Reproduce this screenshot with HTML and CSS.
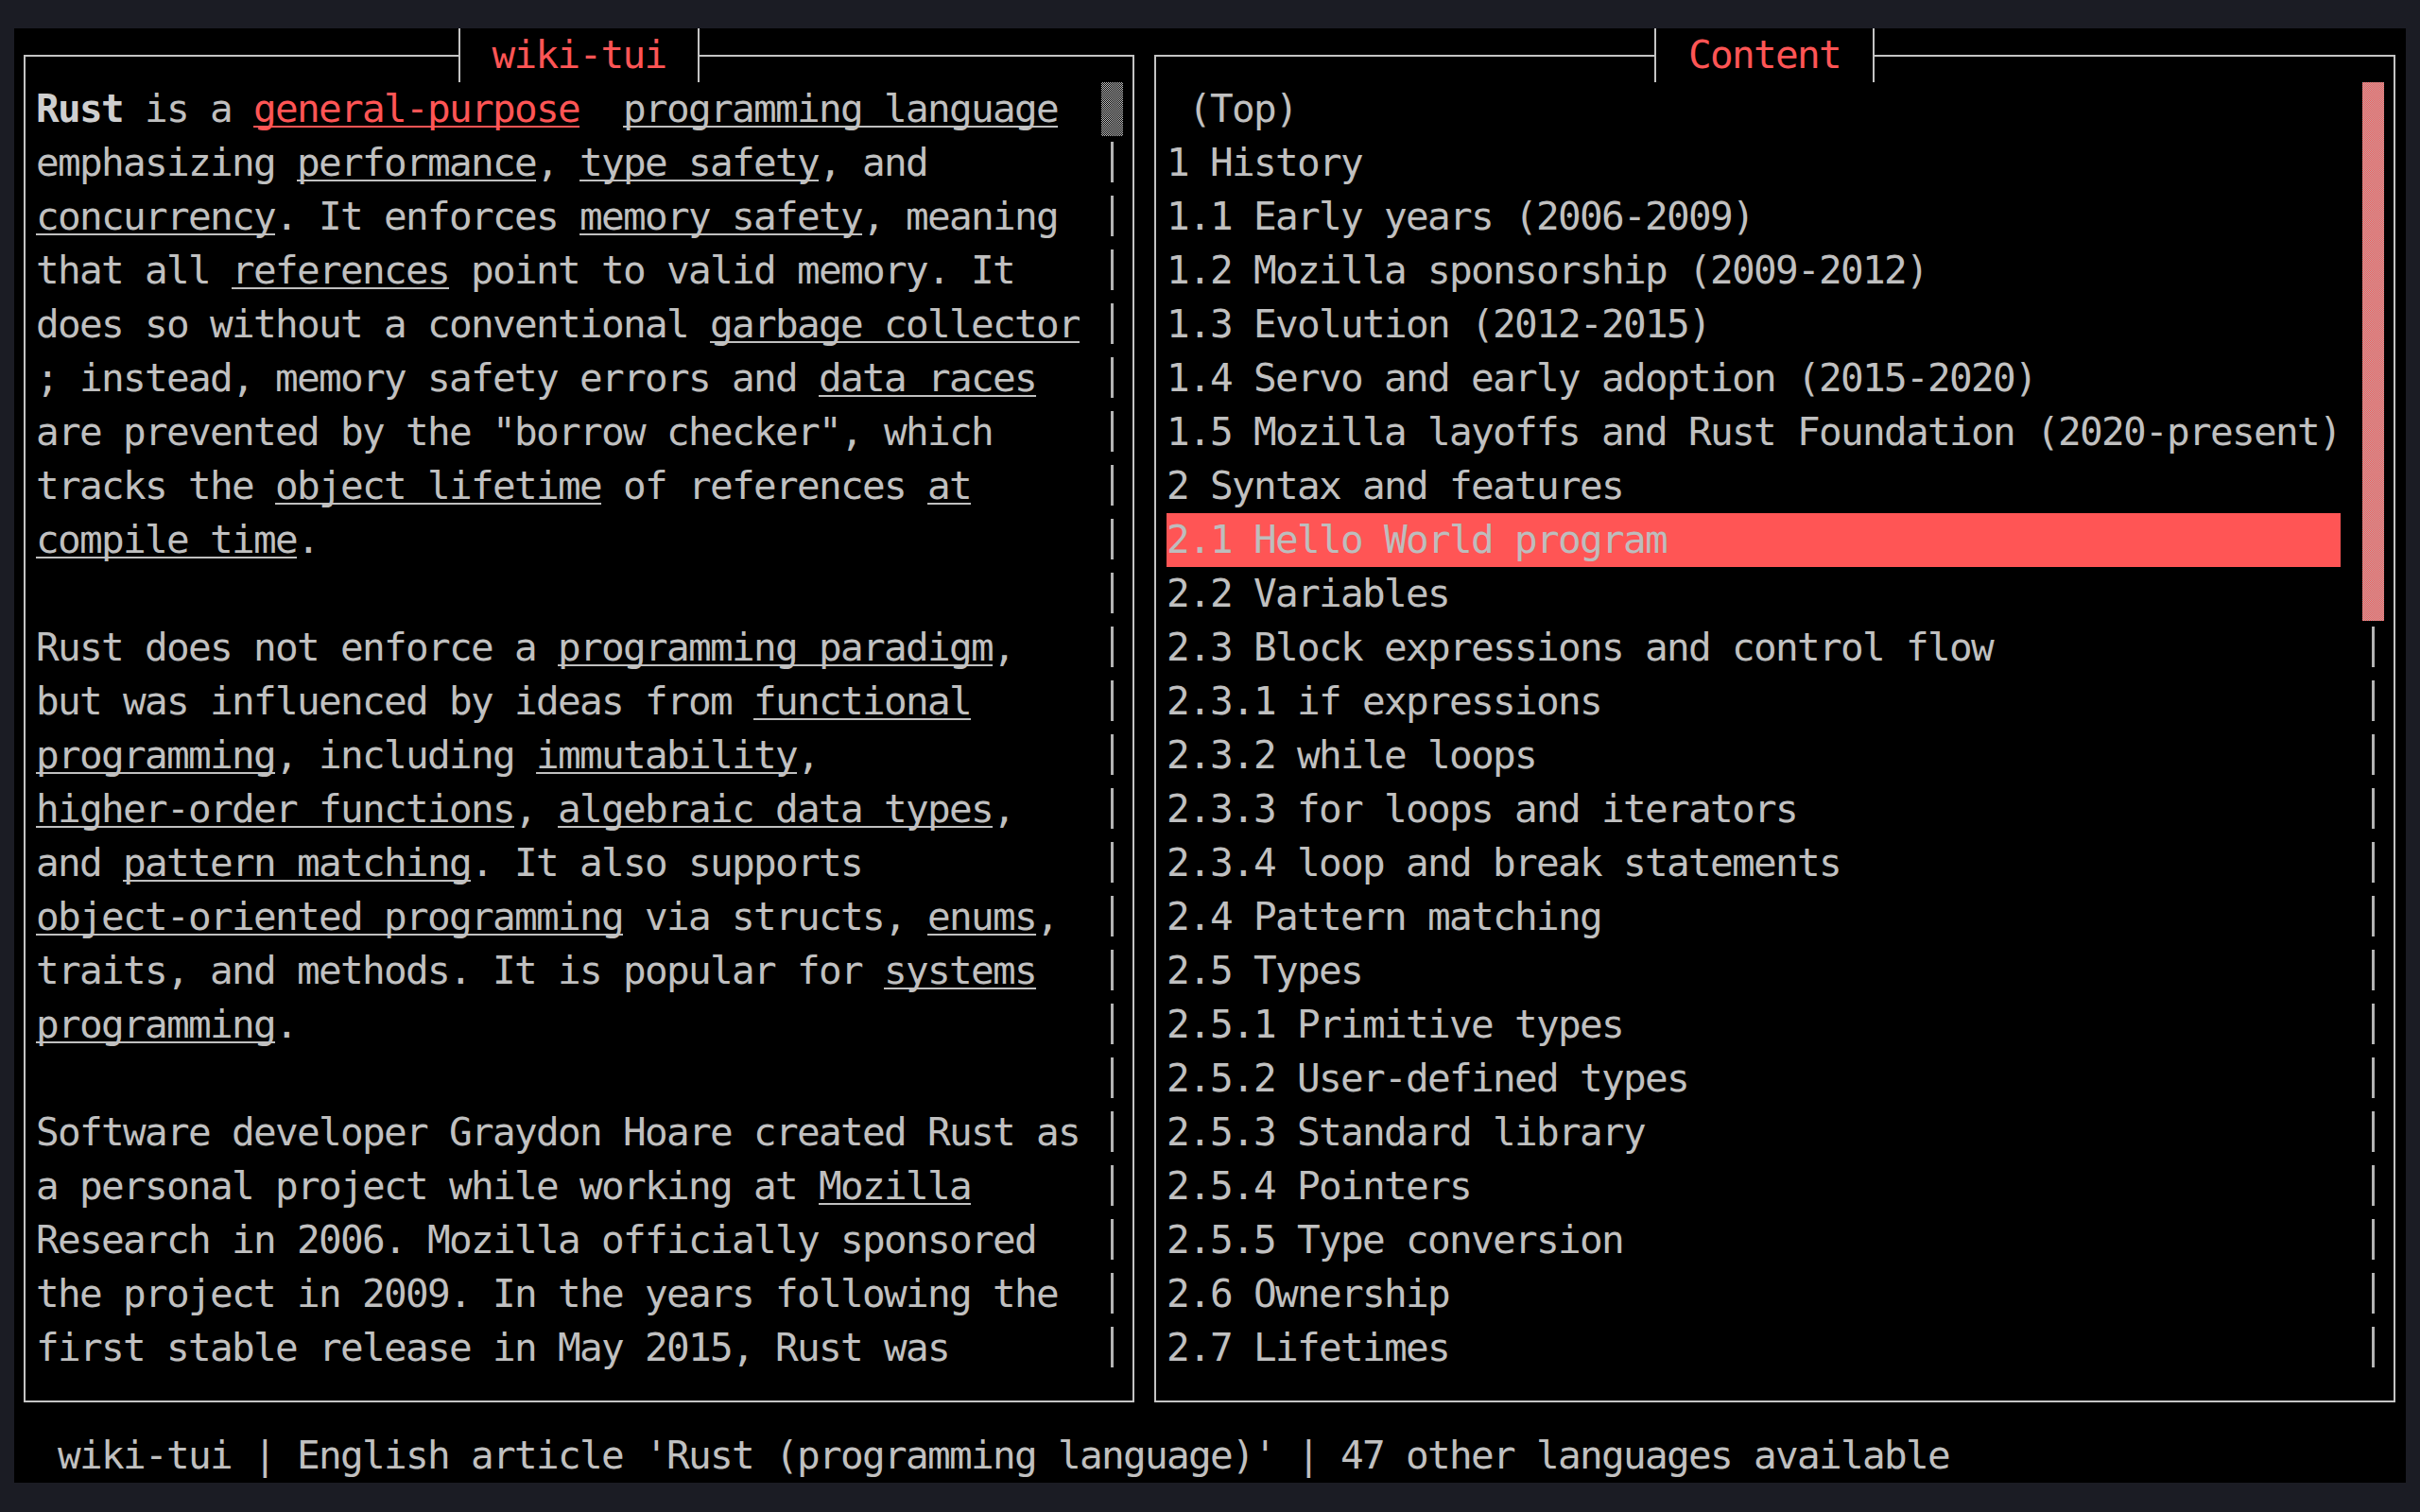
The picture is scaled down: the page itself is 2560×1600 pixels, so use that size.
FILE: index.html
```html
<!DOCTYPE html>
<html>
<head>
<meta charset="utf-8">
<title>wiki-tui</title>
<link rel="stylesheet" href="styles.css">
</head>
<body>
<div class="term">
  <div class="panes">
    <div class="pane pane-left">
      <div class="frame">
        <div class="text">
          <div class="line"><b>Rust</b> is a <u class="sel-link">general-purpose</u>  <u>programming language</u></div>
          <div class="line">emphasizing <u>performance</u>, <u>type safety</u>, and</div>
          <div class="line"><u>concurrency</u>. It enforces <u>memory safety</u>, meaning</div>
          <div class="line">that all <u>references</u> point to valid memory. It</div>
          <div class="line">does so without a conventional <u>garbage collector</u></div>
          <div class="line">; instead, memory safety errors and <u>data races</u></div>
          <div class="line">are prevented by the "borrow checker", which</div>
          <div class="line">tracks the <u>object lifetime</u> of references <u>at</u></div>
          <div class="line"><u>compile time</u>.</div>
          <div class="line"></div>
          <div class="line">Rust does not enforce a <u>programming paradigm</u>,</div>
          <div class="line">but was influenced by ideas from <u>functional</u></div>
          <div class="line"><u>programming</u>, including <u>immutability</u>,</div>
          <div class="line"><u>higher-order functions</u>, <u>algebraic data types</u>,</div>
          <div class="line">and <u>pattern matching</u>. It also supports</div>
          <div class="line"><u>object-oriented programming</u> via structs, <u>enums</u>,</div>
          <div class="line">traits, and methods. It is popular for <u>systems</u></div>
          <div class="line"><u>programming</u>.</div>
          <div class="line"></div>
          <div class="line">Software developer Graydon Hoare created Rust as</div>
          <div class="line">a personal project while working at <u>Mozilla</u></div>
          <div class="line">Research in 2006. Mozilla officially sponsored</div>
          <div class="line">the project in 2009. In the years following the</div>
          <div class="line">first stable release in May 2015, Rust was</div>
        </div>
        <div class="gap"></div>
        <div class="scroll">
          <div class="thumb thumb-gray rows-1"></div>
          <div class="track"></div><div class="track"></div><div class="track"></div><div class="track"></div>
          <div class="track"></div><div class="track"></div><div class="track"></div><div class="track"></div>
          <div class="track"></div><div class="track"></div><div class="track"></div><div class="track"></div>
          <div class="track"></div><div class="track"></div><div class="track"></div><div class="track"></div>
          <div class="track"></div><div class="track"></div><div class="track"></div><div class="track"></div>
          <div class="track"></div><div class="track"></div><div class="track"></div>
        </div>
      </div>
      <div class="title title-left">wiki-tui</div>
    </div>
    <div class="pane pane-right">
      <div class="frame">
        <div class="text text-wide">
          <div class="line"> (Top)</div>
          <div class="line">1 History</div>
          <div class="line">1.1 Early years (2006-2009)</div>
          <div class="line">1.2 Mozilla sponsorship (2009-2012)</div>
          <div class="line">1.3 Evolution (2012-2015)</div>
          <div class="line">1.4 Servo and early adoption (2015-2020)</div>
          <div class="line">1.5 Mozilla layoffs and Rust Foundation (2020-present)</div>
          <div class="line">2 Syntax and features</div>
          <div class="line selected">2.1 Hello World program</div>
          <div class="line">2.2 Variables</div>
          <div class="line">2.3 Block expressions and control flow</div>
          <div class="line">2.3.1 if expressions</div>
          <div class="line">2.3.2 while loops</div>
          <div class="line">2.3.3 for loops and iterators</div>
          <div class="line">2.3.4 loop and break statements</div>
          <div class="line">2.4 Pattern matching</div>
          <div class="line">2.5 Types</div>
          <div class="line">2.5.1 Primitive types</div>
          <div class="line">2.5.2 User-defined types</div>
          <div class="line">2.5.3 Standard library</div>
          <div class="line">2.5.4 Pointers</div>
          <div class="line">2.5.5 Type conversion</div>
          <div class="line">2.6 Ownership</div>
          <div class="line">2.7 Lifetimes</div>
        </div>
        <div class="gap"></div>
        <div class="scroll">
          <div class="thumb thumb-red rows-10"></div>
          <div class="track"></div><div class="track"></div><div class="track"></div><div class="track"></div>
          <div class="track"></div><div class="track"></div><div class="track"></div><div class="track"></div>
          <div class="track"></div><div class="track"></div><div class="track"></div><div class="track"></div>
          <div class="track"></div><div class="track"></div>
        </div>
      </div>
      <div class="title title-right">Content</div>
    </div>
  </div>
  <div class="status"> wiki-tui | English article 'Rust (programming language)' | 47 other languages available</div>
</div>
</body>
</html>
```

FILE: styles.css
```css
html, body {
  margin: 0;
  padding: 0;
  background: #1b1c24;
}

body {
  width: 2560px;
  height: 1600px;
  overflow: hidden;
  font-family: "DejaVu Sans Mono", "Liberation Mono", monospace;
  font-size: 41px;
  letter-spacing: -1.684px;
  color: #c0c0c0;
}

.term {
  margin: 30px 0 0 15px;
  width: 2530px;
  height: 1539px;
  background: #000;
  display: flex;
  flex-direction: column;
}

.panes {
  display: flex;
  height: 1482px;
}

.pane {
  position: relative;
  box-sizing: border-box;
  height: 1482px;
  padding: 28px 11px 28px 10px;
}

.pane-left { width: 1196px; }
.pane-right { width: 1334px; }

.frame {
  box-sizing: border-box;
  height: 100%;
  border: 2px solid #c4c4c4;
  padding: 27px 10px 27px 11px;
  display: flex;
}

.text {
  width: 1104px;
  display: flex;
  flex-direction: column;
}

.text-wide { width: 1242px; }

.line {
  height: 57px;
  line-height: 57px;
  white-space: pre;
  overflow: hidden;
}

.line b { font-weight: bold; color: #cfcfcf; }

.line u {
  text-decoration: underline;
  text-decoration-thickness: 2px;
  text-underline-offset: 4px;
  text-decoration-skip-ink: none;
}

.line u.sel-link { color: #ff5555; }

.line.selected {
  background: #ff5555;
  color: #bdbdbd;
}

.gap { width: 23px; flex: none; }

.scroll {
  width: 23px;
  flex: none;
  display: flex;
  flex-direction: column;
}

.thumb { width: 23px; }
.rows-1 { height: 57px; }
.rows-10 { height: 570px; }

.thumb-gray {
  background: repeating-conic-gradient(#c0c0c0 0 25%, #000 0 50%) 0 0 / 2px 2px;
}

.thumb-red {
  background: repeating-conic-gradient(#ff5555 0 25%, #b8a8a8 0 50%) 0 0 / 2px 2px;
}

.track {
  height: 57px;
  position: relative;
}

.track::before {
  content: "";
  position: absolute;
  left: 10px;
  top: 6px;
  width: 3px;
  height: 43px;
  background: #b4b4b4;
}

.title {
  position: absolute;
  top: 0;
  height: 57px;
  line-height: 57px;
  box-sizing: border-box;
  border-left: 2px solid #c4c4c4;
  border-right: 2px solid #c4c4c4;
  background: #000;
  color: #ff5555;
  text-align: center;
  white-space: pre;
}

.title-left { left: 470px; width: 255px; }
.title-right { left: 539px; width: 233px; }

.status {
  height: 57px;
  line-height: 57px;
  white-space: pre;
  padding-left: 23px;
}
```
